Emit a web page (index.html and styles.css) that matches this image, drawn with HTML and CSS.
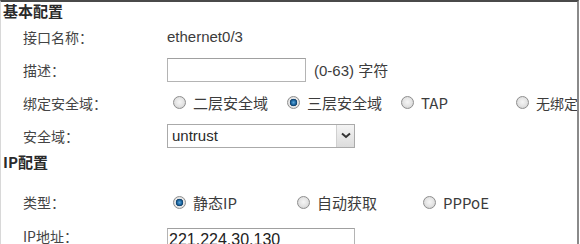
FILE: index.html
```html
<!DOCTYPE html>
<html lang="zh-CN">
<head>
<meta charset="utf-8">
<link rel="stylesheet" href="styles.css">
</head>
<body>
<div class="panel">
  <div class="title">基本配置</div>
  <div class="rows rows-basic">
    <div class="label">接口名称：</div>
    <div class="value">ethernet0/3</div>

    <div class="label">描述：</div>
    <div class="value"><span class="input input-desc"></span><span class="hint">(0-63) 字符</span></div>

    <div class="label">绑定安全域：</div>
    <div class="value opts opts-bind">
      <span class="opt"><span class="radio"></span>二层安全域</span>
      <span class="opt"><span class="radio checked"></span>三层安全域</span>
      <span class="opt"><span class="radio"></span>TAP</span>
      <span class="opt"><span class="radio"></span>无绑定</span>
    </div>

    <div class="label">安全域：</div>
    <div class="value"><span class="select"><span class="select-text">untrust</span><span class="select-btn"><svg width="10" height="7" viewBox="0 0 10 7"><path d="M1 1.5 L5 5 L9 1.5" fill="none" stroke="#333" stroke-width="2"/></svg></span></span></div>
  </div>

  <div class="title title-ip">IP配置</div>
  <div class="rows rows-ip">
    <div class="label">类型：</div>
    <div class="value opts opts-type">
      <span class="opt"><span class="radio checked"></span>静态IP</span>
      <span class="opt"><span class="radio"></span>自动获取</span>
      <span class="opt"><span class="radio"></span>PPPoE</span>
    </div>

    <div class="label">IP地址：</div>
    <div class="value"><span class="input input-ip">221.224.30.130</span></div>
  </div>
</div>
</body>
</html>
```

FILE: styles.css
```css
html, body {
  margin: 0;
  padding: 0;
  background: #fff;
}

body {
  font-family: "Liberation Sans", Arial, "Noto Sans CJK SC", sans-serif;
  font-size: 15px;
  color: #3c3c3c;
}

.panel {
  width: 576px;
  height: 242px;
  border-top: 2px solid #4a4a4a;
  border-left: 1px solid #d8d8d8;
  border-right: 2px solid #8a8a8a;
  overflow: hidden;
}

.title {
  height: 18px;
  line-height: 18px;
  padding-left: 2px;
  font-family: "Noto Sans CJK SC", sans-serif;
  font-weight: 700;
  font-size: 15px;
  color: #2a2a2a;
}

.title-ip {
  margin-top: 1px;
}

.rows {
  display: grid;
  grid-template-columns: 144px 1fr;
  padding-left: 22px;
}

.rows-basic {
  grid-auto-rows: 33px;
}

.rows-ip {
  margin-top: 14px;
  grid-auto-rows: 34px;
}

.label {
  display: flex;
  align-items: center;
  font-family: "Noto Sans CJK SC", sans-serif;
  font-size: 14px;
  color: #444;
}

.value {
  display: flex;
  align-items: center;
  white-space: nowrap;
  min-width: 0;
}

.input {
  box-sizing: border-box;
  display: inline-flex;
  align-items: center;
  height: 24px;
  border: 1px solid #b4b4b4;
  border-top-color: #a0a0a0;
  background: #fff;
}

.input-desc {
  width: 139px;
}

.input-ip {
  width: 188px;
  padding-left: 1px;
  font-size: 16px;
  color: #222;
  margin-top: 8px;
}

.hint {
  margin-left: 8px;
  font-family: "Liberation Sans", "Noto Sans CJK SC", sans-serif;
}

.opts {
  padding-left: 6px;
  font-family: "Noto Sans CJK SC", "Liberation Sans", sans-serif;
  font-size: 15px;
}

.opt {
  display: inline-flex;
  align-items: center;
  flex: none;
}

.opts-bind .opt {
  width: 114px;
}

.opts-bind .opt:nth-child(3) {
  width: 115px;
}

.opts-bind .opt:last-child {
  width: auto;
  font-size: 14px;
}

.opts-type .opt {
  width: 124px;
}

.opts-type .opt:nth-child(2) {
  width: 126px;
}

.opts-type .opt:last-child {
  width: auto;
}

.radio {
  box-sizing: border-box;
  width: 13px;
  height: 13px;
  margin-right: 7px;
  border-radius: 50%;
  border: 1px solid #8e8e8e;
  background: radial-gradient(circle at 50% 45%, #f6f6f6 0%, #e2e2e2 55%, #c4c4c4 100%);
  flex: none;
}

.radio.checked {
  background:
    radial-gradient(circle at 50% 50%, #5fa7d9 0%, #1f6aa5 28%, #0d3c66 45%, #e8e8e8 52%, #d4d4d4 100%);
}

.select {
  box-sizing: border-box;
  display: inline-flex;
  width: 188px;
  height: 24px;
  border: 1px solid #aaa;
  background: #fff;
}

.select-text {
  flex: 1;
  display: flex;
  align-items: center;
  padding-left: 4px;
  color: #2a2a2a;
}

.select-btn {
  width: 17px;
  display: flex;
  align-items: center;
  justify-content: center;
  border-left: 1px solid #d0d0d0;
  background: linear-gradient(#f4f4f4, #dcdcdc);
}
```
